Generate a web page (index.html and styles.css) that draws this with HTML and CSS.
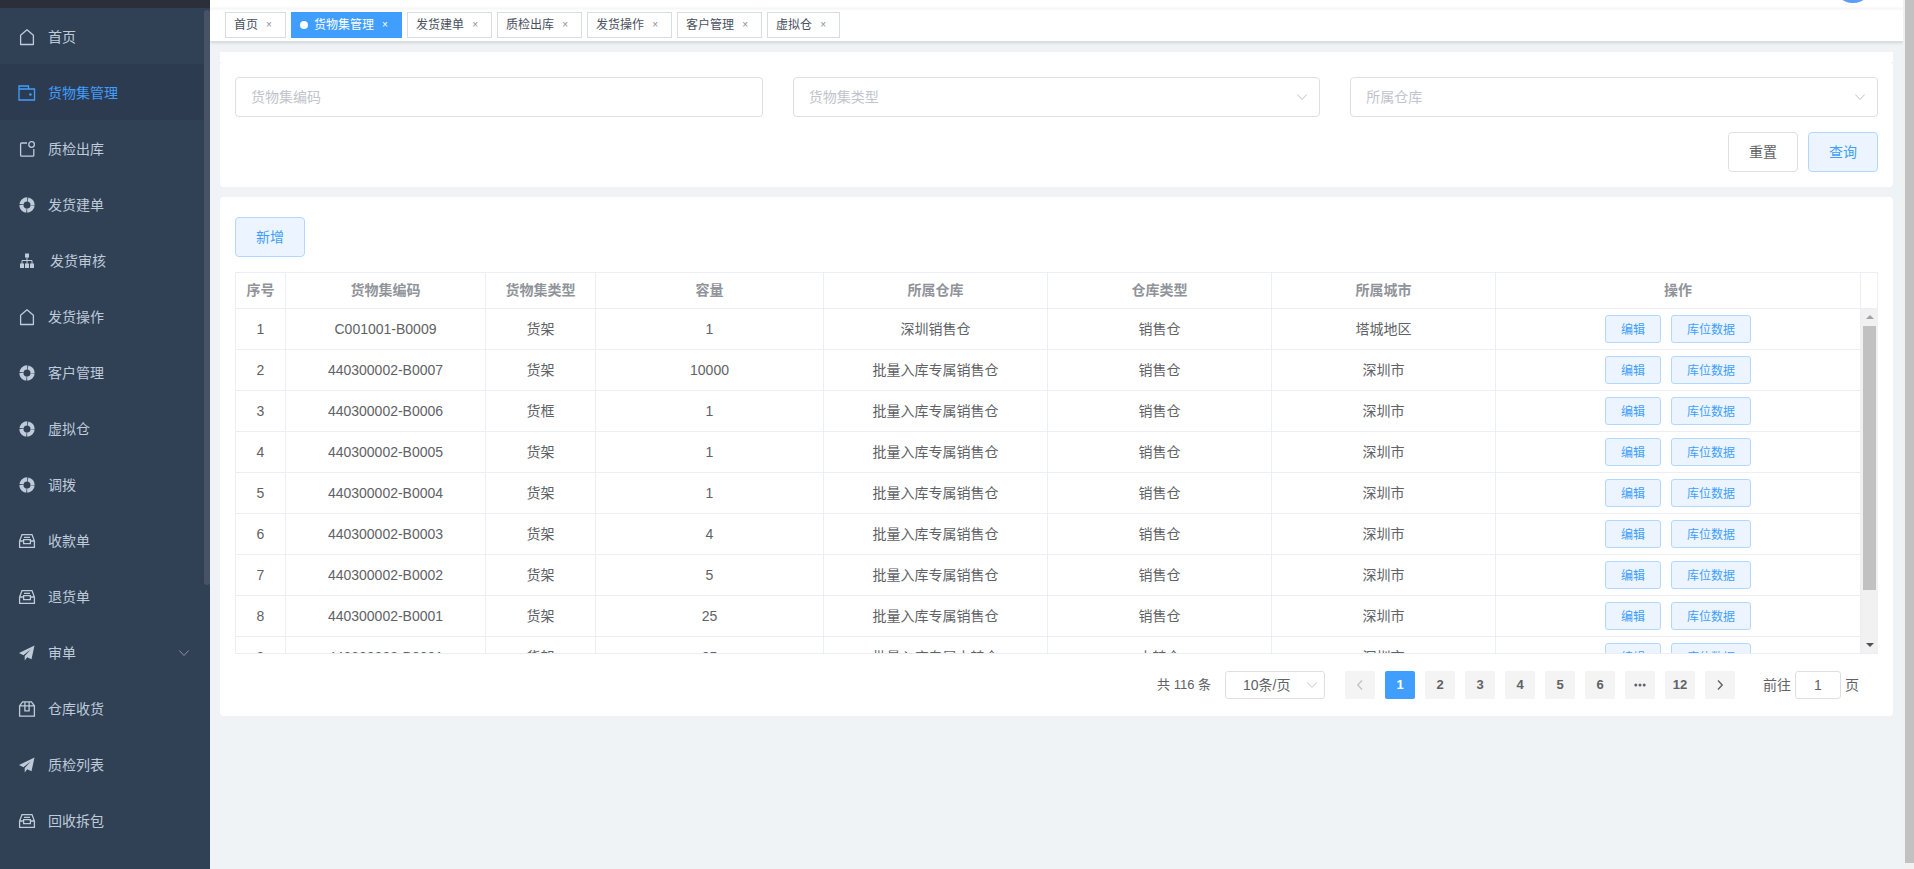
FILE: index.html
```html
<!DOCTYPE html>
<html lang="zh-CN">
<head>
<meta charset="utf-8">
<title>货物集管理</title>
<link rel="stylesheet" href="styles.css">
</head>
<body>
<svg class="sprite" aria-hidden="true">
  <symbol id="i-house" viewBox="0 0 18 18"><path d="M2.6 7.200 9 1.800l6.400 5.400v9.300H2.600z" fill="none" stroke="currentColor" stroke-width="1.300" stroke-linejoin="round"/></symbol>
  <symbol id="i-wallet" viewBox="0 0 18 18"><path d="M1 16V2h9.500v3M1 5h15.500v11H1z" fill="none" stroke="currentColor" stroke-width="1.300"/><circle cx="12.400" cy="10.500" r="1.300" fill="currentColor"/></symbol>
  <symbol id="i-badge" viewBox="0 0 18 18"><path d="M9 3H3.600Q2.600 3 2.600 4v11.200q0 1 1 1h11.200q1 0 1-1V9" fill="none" stroke="currentColor" stroke-width="1.300"/><circle cx="13.600" cy="4.500" r="2.800" fill="none" stroke="currentColor" stroke-width="1.300"/></symbol>
  <symbol id="i-help" viewBox="0 0 18 18"><circle cx="9" cy="9" r="5.600" fill="none" stroke="currentColor" stroke-width="4.200" stroke-dasharray="7.996 0.800" stroke-dashoffset="-0.400"/></symbol>
  <symbol id="i-tree" viewBox="0 0 18 18"><g fill="currentColor"><rect x="7" y="1.500" width="4" height="4"/><rect x="2" y="11.500" width="4" height="4.500"/><rect x="7" y="11.500" width="4" height="4.500"/><rect x="12" y="11.500" width="4" height="4.500"/></g><path d="M9 5v7M4 12V8.500h10V12" fill="none" stroke="currentColor"/></symbol>
  <symbol id="i-tray" viewBox="0 0 18 18"><path d="M1.600 9 4 2.600h10L16.400 9v6.400H1.600zM1.600 9h4v2.600h6.800V9h4M6 5.300h6M5 7.600h8" fill="none" stroke="currentColor" stroke-width="1.300"/></symbol>
  <symbol id="i-plane" viewBox="0 0 18 18"><path d="M16.500 1.500 1 9l4.400 2.200L13 5.200l-6.300 6.700v4.600l2.500-3.200 4.300 2z" fill="currentColor"/></symbol>
  <symbol id="i-box" viewBox="0 0 18 18"><path d="M1.600 5.800 4.600 1.900h8.800l3 3.900v10.300H1.600zM1.600 5.800h14.800M6.900 2v8.800h4.200V2" fill="none" stroke="currentColor" stroke-width="1.300"/></symbol>
  <symbol id="i-down" viewBox="0 0 12 12"><path d="m1.300 3.500 4.700 5 4.700-5" fill="none" stroke="currentColor"/></symbol>
  <symbol id="i-left" viewBox="0 0 12 12"><path d="M8 1.500 3.800 6 8 10.500" fill="none" stroke="currentColor" stroke-width="1.400"/></symbol>
  <symbol id="i-right" viewBox="0 0 12 12"><path d="M4 1.500 8.200 6 4 10.500" fill="none" stroke="currentColor" stroke-width="1.400"/></symbol>
</svg>

<nav class="sidebar">
  <div class="logo-bar"></div>
  <ul class="menu">
    <li><a class="menu-item" href="#"><svg><use href="#i-house"/></svg>首页</a></li>
    <li><a class="menu-item menu-item--active" href="#"><svg><use href="#i-wallet"/></svg>货物集管理</a></li>
    <li><a class="menu-item" href="#"><svg><use href="#i-badge"/></svg>质检出库</a></li>
    <li><a class="menu-item" href="#"><svg><use href="#i-help"/></svg>发货建单</a></li>
    <li><a class="menu-item menu-item--wide" href="#"><svg><use href="#i-tree"/></svg>发货审核</a></li>
    <li><a class="menu-item" href="#"><svg><use href="#i-house"/></svg>发货操作</a></li>
    <li><a class="menu-item" href="#"><svg><use href="#i-help"/></svg>客户管理</a></li>
    <li><a class="menu-item" href="#"><svg><use href="#i-help"/></svg>虚拟仓</a></li>
    <li><a class="menu-item" href="#"><svg><use href="#i-help"/></svg>调拨</a></li>
    <li><a class="menu-item" href="#"><svg><use href="#i-tray"/></svg>收款单</a></li>
    <li><a class="menu-item" href="#"><svg><use href="#i-tray"/></svg>退货单</a></li>
    <li><a class="menu-item" href="#"><svg><use href="#i-plane"/></svg>审单<svg class="menu-arrow"><use href="#i-down"/></svg></a></li>
    <li><a class="menu-item" href="#"><svg><use href="#i-box"/></svg>仓库收货</a></li>
    <li><a class="menu-item" href="#"><svg><use href="#i-plane"/></svg>质检列表</a></li>
    <li><a class="menu-item" href="#"><svg><use href="#i-tray"/></svg>回收拆包</a></li>
  </ul>
  <div class="sidebar-thumb"></div>
</nav>

<div class="main">
  <header class="navbar"><div class="avatar"></div></header>
  <div class="tags">
    <a class="tag" href="#">首页<span class="tag-close">×</span></a>
    <a class="tag tag--active" href="#">货物集管理<span class="tag-close">×</span></a>
    <a class="tag" href="#">发货建单<span class="tag-close">×</span></a>
    <a class="tag" href="#">质检出库<span class="tag-close">×</span></a>
    <a class="tag" href="#">发货操作<span class="tag-close">×</span></a>
    <a class="tag" href="#">客户管理<span class="tag-close">×</span></a>
    <a class="tag" href="#">虚拟仓<span class="tag-close">×</span></a>
  </div>

  <main class="content">
    <div class="search-wrap">
      <form class="card search">
        <div class="fields">
          <input class="field" type="text" placeholder="货物集编码" aria-label="货物集编码">
          <div class="select">
            <select class="field" aria-label="货物集类型"><option>货物集类型</option></select>
            <svg class="select-arrow"><use href="#i-down"/></svg>
          </div>
          <div class="select">
            <select class="field" aria-label="所属仓库"><option>所属仓库</option></select>
            <svg class="select-arrow"><use href="#i-down"/></svg>
          </div>
        </div>
        <div class="actions">
          <button class="btn" type="reset">重置</button>
          <button class="btn btn--primary" type="button">查询</button>
        </div>
      </form>
    </div>

    <section class="card list">
      <button class="btn btn--primary" type="button">新增</button>
      <div class="table-box">
        <div class="table-view">
          <table class="table">
            <colgroup>
              <col class="col-index"><col class="col-code"><col class="col-type"><col class="col-size"><col><col><col><col class="col-ops">
            </colgroup>
            <thead>
              <tr><th>序号</th><th>货物集编码</th><th>货物集类型</th><th>容量</th><th>所属仓库</th><th>仓库类型</th><th>所属城市</th><th>操作</th></tr>
            </thead>
            <tbody>
              <tr><td>1</td><td>C001001-B0009</td><td>货架</td><td>1</td><td>深圳销售仓</td><td>销售仓</td><td>塔城地区</td><td><div class="ops"><button class="btn btn--primary btn--mini">编辑</button><button class="btn btn--primary btn--mini">库位数据</button></div></td></tr>
              <tr><td>2</td><td>440300002-B0007</td><td>货架</td><td>10000</td><td>批量入库专属销售仓</td><td>销售仓</td><td>深圳市</td><td><div class="ops"><button class="btn btn--primary btn--mini">编辑</button><button class="btn btn--primary btn--mini">库位数据</button></div></td></tr>
              <tr><td>3</td><td>440300002-B0006</td><td>货框</td><td>1</td><td>批量入库专属销售仓</td><td>销售仓</td><td>深圳市</td><td><div class="ops"><button class="btn btn--primary btn--mini">编辑</button><button class="btn btn--primary btn--mini">库位数据</button></div></td></tr>
              <tr><td>4</td><td>440300002-B0005</td><td>货架</td><td>1</td><td>批量入库专属销售仓</td><td>销售仓</td><td>深圳市</td><td><div class="ops"><button class="btn btn--primary btn--mini">编辑</button><button class="btn btn--primary btn--mini">库位数据</button></div></td></tr>
              <tr><td>5</td><td>440300002-B0004</td><td>货架</td><td>1</td><td>批量入库专属销售仓</td><td>销售仓</td><td>深圳市</td><td><div class="ops"><button class="btn btn--primary btn--mini">编辑</button><button class="btn btn--primary btn--mini">库位数据</button></div></td></tr>
              <tr><td>6</td><td>440300002-B0003</td><td>货架</td><td>4</td><td>批量入库专属销售仓</td><td>销售仓</td><td>深圳市</td><td><div class="ops"><button class="btn btn--primary btn--mini">编辑</button><button class="btn btn--primary btn--mini">库位数据</button></div></td></tr>
              <tr><td>7</td><td>440300002-B0002</td><td>货架</td><td>5</td><td>批量入库专属销售仓</td><td>销售仓</td><td>深圳市</td><td><div class="ops"><button class="btn btn--primary btn--mini">编辑</button><button class="btn btn--primary btn--mini">库位数据</button></div></td></tr>
              <tr><td>8</td><td>440300002-B0001</td><td>货架</td><td>25</td><td>批量入库专属销售仓</td><td>销售仓</td><td>深圳市</td><td><div class="ops"><button class="btn btn--primary btn--mini">编辑</button><button class="btn btn--primary btn--mini">库位数据</button></div></td></tr>
              <tr><td>9</td><td>440300002-B0001</td><td>货架</td><td>25</td><td>批量入库专属中转仓</td><td>中转仓</td><td>深圳市</td><td><div class="ops"><button class="btn btn--primary btn--mini">编辑</button><button class="btn btn--primary btn--mini">库位数据</button></div></td></tr>
            </tbody>
          </table>
        </div>
        <div class="gutter" aria-hidden="true">
          <div class="gutter-head"></div>
          <div class="scrollbar">
            <span class="arrow arrow--up"></span>
            <span class="scrollbar-thumb"></span>
            <span class="arrow arrow--down"></span>
          </div>
        </div>
      </div>

      <div class="pager">
        <span class="pager-total">共 116 条</span>
        <div class="select pager-size">
          <select class="field field--small" aria-label="每页条数"><option>10条/页</option></select>
          <svg class="select-arrow"><use href="#i-down"/></svg>
        </div>
        <div class="pages">
          <button class="page" disabled aria-label="上一页"><svg><use href="#i-left"/></svg></button>
          <button class="page page--active">1</button>
          <button class="page">2</button>
          <button class="page">3</button>
          <button class="page">4</button>
          <button class="page">5</button>
          <button class="page">6</button>
          <button class="page" aria-label="更多"><svg viewBox="0 0 12 12" fill="currentColor"><circle cx="1.800" cy="6" r="1.500"/><circle cx="6" cy="6" r="1.500"/><circle cx="10.200" cy="6" r="1.500"/></svg></button>
          <button class="page">12</button>
          <button class="page" aria-label="下一页"><svg><use href="#i-right"/></svg></button>
        </div>
        <label class="jump">前往<input class="field field--small" type="text" value="1">页</label>
      </div>
    </section>
  </main>
</div>
<div class="page-scroll" aria-hidden="true"><div class="page-thumb"></div></div>
</body>
</html>
```
FILE: styles.css
```css
* { box-sizing: border-box; }

body {
  margin: 0;
  display: flex;
  height: 100vh;
  overflow: hidden;
  background: #eff3f6;
  color: #606266;
  font: 14px/20px "Liberation Sans", "Noto Sans CJK SC", sans-serif;
}

button, input, select { font: inherit; color: inherit; }
a { color: inherit; text-decoration: none; }
.sprite { position: absolute; width: 0; height: 0; }

/* sidebar */
.sidebar { position: relative; flex: none; width: 210px; background: #304156; color: #bfcbd9; }
.logo-bar { height: 8px; background: #2b2f3a; }
.menu { margin: 0; padding: 0; list-style: none; }
.menu-item { display: flex; align-items: center; gap: 12px; height: 56px; padding: 2px 20px 0 18px; }
.menu-item svg { flex: none; width: 18px; height: 18px; }
.menu-item--wide { gap: 14px; }
.menu-item--active { background: #2d3b50; color: #409eff; }
.menu-item .menu-arrow { width: 12px; height: 12px; margin-left: auto; color: #909399; }
.sidebar-thumb { position: absolute; top: 10px; right: 0; width: 6px; height: 575px; border-radius: 3px; background: #475365; }

/* top bars */
.main { flex: 1; min-width: 0; }
.navbar { display: flex; justify-content: flex-end; align-items: flex-end; height: 8px; padding: 0 30px; overflow: hidden; background: #fff; }
.avatar { flex: none; width: 40px; height: 40px; margin-bottom: 5px; border-radius: 50%; background: #5a9cf8; }
.tags {
  display: flex;
  gap: 5px;
  height: 34px;
  padding: 4px 15px 0;
  background: #fff;
  border-bottom: 1px solid #d8dce5;
  box-shadow: 0 1px 3px rgba(0, 0, 0, .12), inset 0 3px 3px -2px rgba(0, 0, 0, .06);
}
.tag { display: flex; align-items: center; height: 26px; padding: 0 8px; border: 1px solid #d8dce5; background: #fff; color: #495060; font-size: 12px; }
.tag--active { border-color: #409eff; background: #409eff; color: #fff; }
.tag--active::before { content: ""; width: 8px; height: 8px; margin-right: 6px; border-radius: 50%; background: #fff; }
.tag-close { width: 16px; margin-left: 3px; text-align: center; color: #8a8f99; font-size: 10px; }
.tag--active .tag-close { color: #fff; }

/* cards */
.content { display: flex; flex-direction: column; gap: 10px; padding: 10px; }
.card { padding: 15px; border-radius: 4px; background: #fff; }
.search-wrap { padding-top: 10px; background: linear-gradient(#fff 10px, transparent 10px); }
.fields { display: grid; grid-template-columns: repeat(3, 1fr); gap: 30px; }
.field { display: block; width: 100%; height: 40px; padding: 0 15px; border: 1px solid #dcdfe6; border-radius: 4px; background: #fff; outline: 0; }
.field::placeholder { color: #c0c4cc; opacity: 1; }
.select { position: relative; }
.select .field { appearance: none; color: #c0c4cc; }
.select-arrow { position: absolute; top: 50%; right: 12px; width: 12px; height: 12px; margin-top: -6px; color: #c0c4cc; pointer-events: none; }
.actions { display: flex; justify-content: flex-end; gap: 10px; padding: 15px 0 0; }
.btn { min-width: 70px; height: 40px; padding: 0 20px; border: 1px solid #dcdfe6; border-radius: 4px; background: #fff; }
.btn--primary { border-color: #b3d8ff; background: #ecf5ff; color: #409eff; }
.btn--mini { min-width: 0; height: 28px; padding: 2px 15px 0; border-radius: 3px; font-size: 12px; line-height: 16px; }

/* table */
.list { padding: 20px 15px 17px; }
.table-box { display: flex; height: 382px; margin-top: 15px; border: 1px solid #ebeef5; border-right: 0; }
.table-view { flex: 1; min-width: 0; overflow: hidden; }
.table { width: 100%; table-layout: fixed; border-collapse: separate; border-spacing: 0; text-align: center; }
.table th, .table td { padding: 0; border: solid #ebeef5; border-width: 0 1px 1px 0; }
.table th { height: 36px; padding-bottom: 2px; color: #909399; font-weight: bold; }
.table td { height: 41px; }
.col-index { width: 50px; }
.col-code { width: 200px; }
.col-type { width: 110px; }
.col-size { width: 228px; }
.col-ops { width: 365px; }
.ops { display: flex; justify-content: center; gap: 10px; }
.gutter { display: flex; flex-direction: column; flex: none; width: 17px; }
.gutter-head { height: 36px; border: solid #ebeef5; border-width: 0 1px 1px 0; }
.scrollbar { display: flex; flex: 1; flex-direction: column; align-items: center; padding: 6px 0; background: #f1f1f1; }
.scrollbar-thumb { width: 13px; height: 264px; margin: 7px 0 auto; background: #c1c1c1; }
.arrow { border: 4px solid transparent; }
.arrow--up { border-top: 0; border-bottom-color: #a3a3a3; }
.arrow--down { border-bottom: 0; border-top-color: #505050; }

/* pagination */
.pager { display: flex; align-items: center; justify-content: flex-end; padding: 17px 19px 0 0; }
.pager-total { margin-right: 14px; font-size: 13px; }
.pager-size { width: 100px; margin-right: 20px; }
.field--small { height: 28px; border-radius: 3px; }
.select .field--small { padding: 0 17px; color: #606266; }
.pager-size .select-arrow { right: 7px; }
.pages { display: flex; gap: 10px; }
.page { display: flex; align-items: center; justify-content: center; width: 30px; height: 28px; padding: 0; border: 0; border-radius: 2px; background: #f4f4f5; font-size: 13px; font-weight: bold; }
.page svg { width: 12px; height: 12px; }
.page:disabled { color: #c0c4cc; }
.page--active { background: #409eff; color: #fff; }
.jump { display: flex; align-items: center; gap: 4px; margin-left: 28px; }
.jump .field { width: 46px; padding: 0 3px; text-align: center; }

/* page scrollbar */
.page-scroll { flex: none; width: 11px; padding: 0 0 6px 2px; background: #f1f1f1; }
.page-thumb { height: 100%; background: #c1c1c1; }
```
